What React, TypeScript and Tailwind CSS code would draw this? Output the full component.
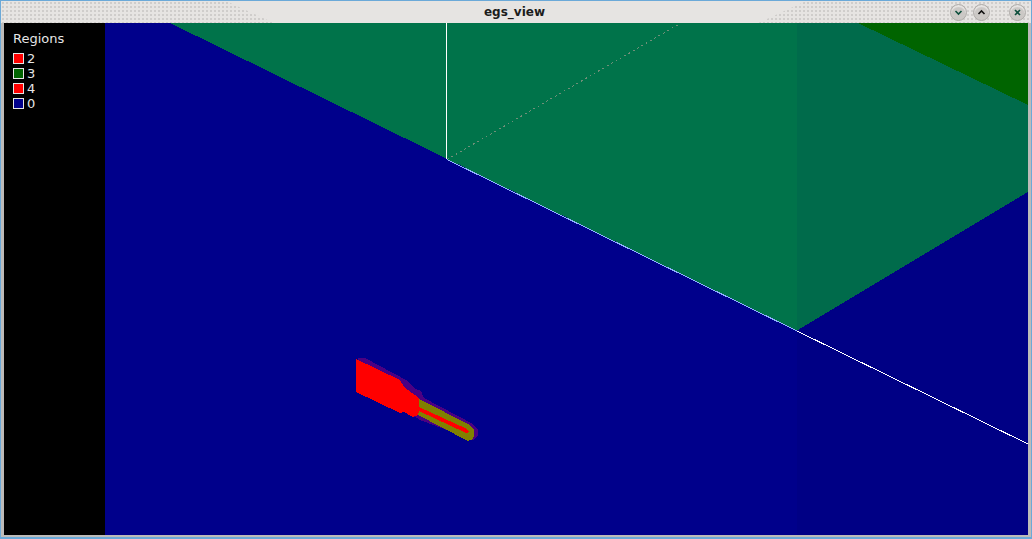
const legend = [
  { label: "2", color: "bg-[#ff0000]" },
  { label: "3", color: "bg-[#006400]" },
  { label: "4", color: "bg-[#ff0000]" },
  { label: "0", color: "bg-[#00008b]" },
]

const WinButton = ({ children }: { children: React.ReactNode }) => (
  <div className="w-[17px] h-[17px] rounded-full flex items-center justify-center bg-[#cbc8c5] border border-[#b0adaa] shadow-[inset_0_2px_1px_#e8e6e4]">
    <svg width="9" height="9" viewBox="0 0 9 9" fill="none" strokeWidth="1.6">
      {children}
    </svg>
  </div>
)

const Scene = () => (
  <svg className="block w-[923px] h-[512px]" viewBox="105 23 923 512" shapeRendering="crispEdges">
    <rect x="105" y="23" width="692" height="512" fill="#00008b" />
    <rect x="797" y="23" width="231" height="512" fill="#000085" />
    <polygon points="170,23 797,23 797,330.5" fill="#00734a" />
    <polygon points="797,23 1028,23 1028,192 797,330.5" fill="#006b4b" />
    <polygon points="858,23 1028,23 1028,105" fill="#006400" />
    <line x1="447" y1="159.5" x2="680" y2="23.5" stroke="#6f8f78" strokeWidth="1" strokeDasharray="2 3" />
    <line x1="446.5" y1="23" x2="446.5" y2="159" stroke="#ffffff" strokeWidth="1" />
    <line x1="447" y1="159.5" x2="797" y2="331" stroke="#8fb0ff" strokeWidth="1" />
    <line x1="797" y1="331" x2="1028" y2="444" stroke="#ffffff" strokeWidth="1" />
    <polygon points="358,358 365,358 408,381 414,388 421,391 424,398 473,424 478,430 478,435 473,440 420,420 356,380" fill="#4b0082" />
    <polygon points="419,399 470,425 474,430 474,436 473,439 468,441 418,415" fill="#808000" />
    <polygon points="419,407 467,429 469,432 466,433 419,411" fill="#ff0000" />
    <polygon points="356,359 400,380 404,387 419,398 419,412 418,415 413,417 404,412 400,413 356,392" fill="#ff0000" />
  </svg>
)

export default function App() {
  return (
    <div className="w-[1032px] h-[539px] flex flex-col bg-[#bdbbb9] border-t border-x border-b-2 border-[#6ba9d8] overflow-hidden" style={{ fontFamily: '"DejaVu Sans", sans-serif' }}>
      <div className="relative h-[22px] shrink-0 flex items-center justify-center bg-[#e6e4e2]">
        <div className="absolute inset-y-0 left-0 w-[273px] bg-[radial-gradient(#cfcdcb_0.8px,transparent_0.9px)] bg-[length:4px_4px] [clip-path:polygon(0_0,225px_0,273px_100%,0_100%)]" />
        <div className="absolute inset-y-0 right-0 w-[273px] bg-[radial-gradient(#cfcdcb_0.8px,transparent_0.9px)] bg-[length:4px_4px] [clip-path:polygon(48px_0,100%_0,100%_100%,0_100%)]" />
        <div className="text-[12px] font-bold text-[#1c1c1c] leading-none ml-[-3px]">egs_view</div>
        <div className="absolute left-[949px] top-[3px] flex">
          <WinButton><path d="M1.5 3 4.5 6 7.5 3" stroke="#0d4f3c" /></WinButton>
          <div className="w-[6px]" />
          <WinButton><path d="M1.5 6 4.5 3 7.5 6" stroke="#111" /></WinButton>
          <div className="w-[19px]" />
          <WinButton><path d="M2 2 7 7M7 2 2 7" stroke="#0d4f3c" /></WinButton>
        </div>
      </div>
      <div className="flex-1 flex px-[3px] pb-[1px] min-h-0">
        <div className="w-[101px] h-[512px] bg-black text-[#e6e6e6] pl-[9px] pt-[8px] text-[13px] shrink-0">
          <div className="leading-[15px] mb-[5px]">Regions</div>
          {legend.map((r) => (
            <div key={r.label} className="flex items-center gap-[3px] h-[15px] text-[13px]">
              <span className={`w-[11px] h-[11px] border border-[#e6e6e6] ${r.color}`} />
              {r.label}
            </div>
          ))}
        </div>
        <Scene />
      </div>
    </div>
  )
}
